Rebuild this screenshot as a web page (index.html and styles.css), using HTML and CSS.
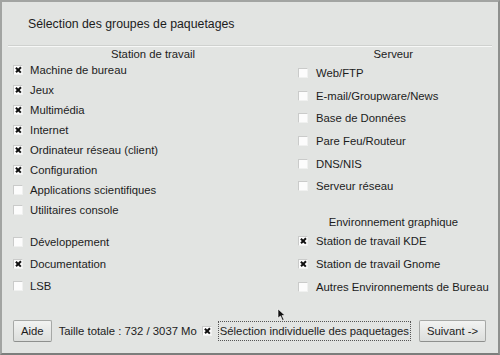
FILE: index.html
```html
<!DOCTYPE html>
<html lang="fr">
<head>
    <meta charset="UTF-8">
    <title>Sélection des groupes de paquetages</title>
    <link rel="stylesheet" href="styles.css">
</head>
<body>
    <div class="window">
        <div class="title">Sélection des groupes de paquetages</div>
        <div class="separator"></div>

        <div class="groups">
            <div class="column left">
                <div class="heading">Station de travail</div>
                <div class="list main">
                    <label class="row"><span class="box checked"></span>Machine de bureau</label>
                    <label class="row"><span class="box checked"></span>Jeux</label>
                    <label class="row"><span class="box checked"></span>Multimédia</label>
                    <label class="row"><span class="box checked"></span>Internet</label>
                    <label class="row"><span class="box checked"></span>Ordinateur réseau (client)</label>
                    <label class="row"><span class="box checked"></span>Configuration</label>
                    <label class="row"><span class="box"></span>Applications scientifiques</label>
                    <label class="row"><span class="box"></span>Utilitaires console</label>
                </div>
                <div class="list extra">
                    <label class="row"><span class="box"></span>Développement</label>
                    <label class="row"><span class="box checked"></span>Documentation</label>
                    <label class="row"><span class="box"></span>LSB</label>
                </div>
            </div>

            <div class="column right">
                <div class="heading">Serveur</div>
                <div class="list server">
                    <label class="row"><span class="box"></span>Web/FTP</label>
                    <label class="row"><span class="box"></span>E-mail/Groupware/News</label>
                    <label class="row"><span class="box"></span>Base de Données</label>
                    <label class="row"><span class="box"></span>Pare Feu/Routeur</label>
                    <label class="row"><span class="box"></span>DNS/NIS</label>
                    <label class="row"><span class="box"></span>Serveur réseau</label>
                </div>
                <div class="heading env">Environnement graphique</div>
                <div class="list desktop">
                    <label class="row"><span class="box checked"></span>Station de travail KDE</label>
                    <label class="row"><span class="box checked"></span>Station de travail Gnome</label>
                    <label class="row"><span class="box"></span>Autres Environnements de Bureau</label>
                </div>
            </div>
        </div>

        <div class="footer">
            <button type="button" class="btn">Aide</button>
            <span class="size">Taille totale : 732 / 3037 Mo</span>
            <span class="box checked"></span>
            <span class="focus">Sélection individuelle des paquetages</span>
            <button type="button" class="btn next">Suivant -&gt;</button>
        </div>

        <svg class="cursor" width="10" height="14" viewBox="0 0 10 14">
            <path d="M1 1 L1 10 L3.5 8 L5.5 12.5 L7 11.8 L5 7.5 L8 7.5 Z" fill="#111" stroke="#fff" stroke-width="0.6"/>
        </svg>
    </div>
</body>
</html>
```

FILE: styles.css
```css
body {
    margin: 0;
    font-family: "Liberation Sans", Arial, sans-serif;
    font-size: 11.3px;
    color: #1c1c1c;
    background: #e2e4e2;
}

.window {
    position: relative;
    box-sizing: border-box;
    width: 500px;
    height: 355px;
    border: 2px solid #a2a4a2;
    border-bottom-color: #7c7e7c;
    border-right-color: #8e908e;
    background: #e2e4e2;
    display: flex;
    flex-direction: column;
    white-space: nowrap;
}

.title {
    margin-top: 14px;
    padding-left: 26px;
    font-size: 12.3px;
    line-height: 16px;
}

.separator {
    margin: 13px 6px 0 6px;
    border-top: 1px solid #cfd1cf;
    border-bottom: 1px solid #f7f8f7;
}

.groups {
    display: grid;
    grid-template-columns: 290px 1fr;
    padding: 0 10px 0 6px;
}

.heading {
    text-align: center;
    line-height: 15px;
}

.list {
    display: flex;
    flex-direction: column;
}

.row {
    display: flex;
    align-items: center;
    height: 20px;
    gap: 7px;
}

.left .main {
    margin-top: -2px;
}

.left .row {
    padding-left: 5px;
}

.left .extra {
    margin-top: 11px;
}
.left .extra .row {
    height: 22px;
}

.right .server .row {
    height: 22.6px;
    gap: 8px;
}
.right .env {
    margin-top: 17px;
}
.right .desktop .row {
    height: 23px;
    gap: 8px;
}

.box {
    box-sizing: border-box;
    width: 10px;
    height: 10px;
    flex: none;
    background: #fcfcfc;
    border-top: 1px solid #cacbca;
    border-left: 1px solid #cacbca;
    border-right: 1px solid #f0f1f0;
    border-bottom: 1px solid #f0f1f0;
    position: relative;
}
.box.checked::before,
.box.checked::after {
    content: "";
    position: absolute;
    left: 0.8px;
    top: 3.3px;
    width: 6.5px;
    height: 1.8px;
    background: #111;
    transform: rotate(45deg);
}
.box.checked::after {
    transform: rotate(-45deg);
}

.footer {
    margin-top: auto;
    padding: 0 12px 11px 11px;
    display: flex;
    align-items: center;
    height: 22px;
}

.btn {
    box-sizing: border-box;
    height: 22px;
    padding: 0 7px;
    font-family: inherit;
    font-size: 11.3px;
    color: #1c1c1c;
    background: linear-gradient(#f2f3f2, #dcdedc);
    border: 1px solid #a6a8a6;
    border-bottom-color: #8e908e;
    border-radius: 2px;
    white-space: nowrap;
}

.size {
    margin-left: 7px;
    margin-right: 5px;
}

.focus {
    margin-left: 6px;
    padding: 2px 1px;
    border: 1px dotted #555;
    line-height: 14px;
}

.next {
    margin-left: auto;
    width: 67px;
    padding: 0;
}

.cursor {
    position: absolute;
    left: 275px;
    top: 306px;
}
```
